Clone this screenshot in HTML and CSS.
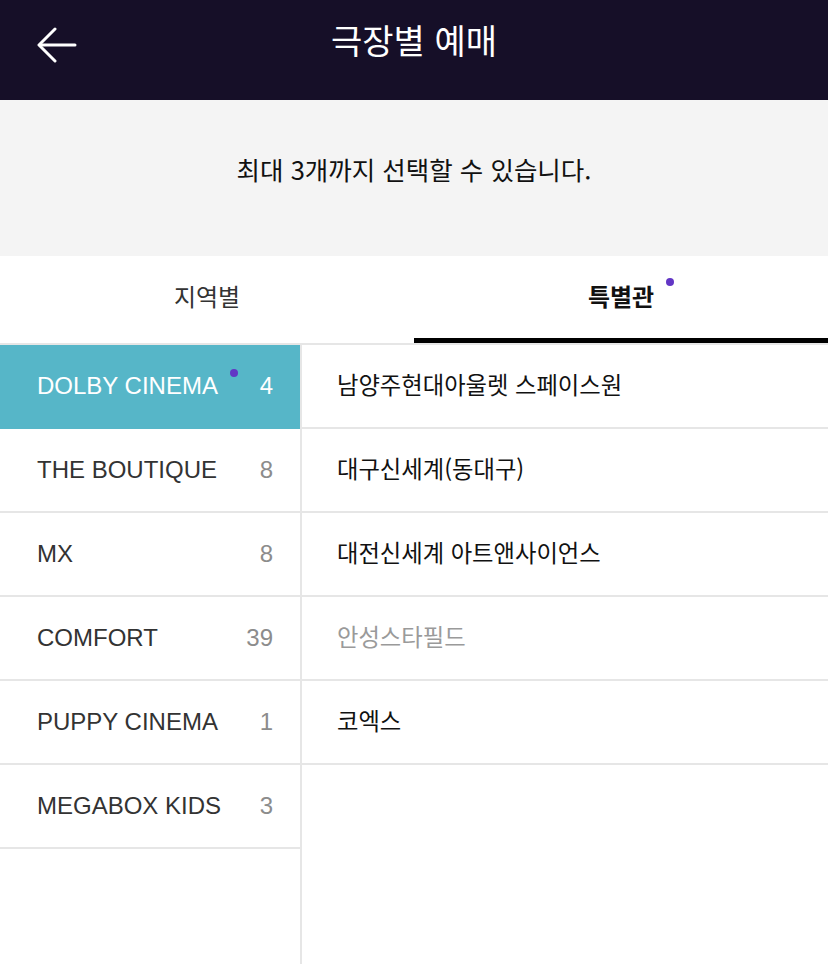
FILE: index.html
```html
<!DOCTYPE html>
<html lang="ko">
<head>
<meta charset="utf-8">
<title>극장별 예매</title>
<link rel="stylesheet" href="styles.css">
</head>
<body>
<header class="topbar">
  <button class="back" aria-label="뒤로">
    <svg width="40" height="36" viewBox="0 0 40 36" fill="none" stroke="#fff" stroke-width="3" stroke-linecap="round" stroke-linejoin="round">
      <path d="M38 18H3"/>
      <path d="M18 2L2 18L18 34"/>
    </svg>
  </button>
  <h1 class="title">극장별 예매</h1>
</header>
<div class="notice">최대 3개까지 선택할 수 있습니다.</div>
<nav class="tabs">
  <div class="tab">지역별</div>
  <div class="tab active"><span class="tab-label">특별관<span class="dot"></span></span></div>
</nav>
<main class="lists">
  <ul class="cats">
    <li class="cat selected"><span class="cat-name">DOLBY CINEMA<span class="dot"></span></span><span class="cnt">4</span></li>
    <li class="cat"><span class="cat-name">THE BOUTIQUE</span><span class="cnt">8</span></li>
    <li class="cat"><span class="cat-name">MX</span><span class="cnt">8</span></li>
    <li class="cat"><span class="cat-name">COMFORT</span><span class="cnt">39</span></li>
    <li class="cat"><span class="cat-name">PUPPY CINEMA</span><span class="cnt">1</span></li>
    <li class="cat"><span class="cat-name">MEGABOX KIDS</span><span class="cnt">3</span></li>
  </ul>
  <ul class="theaters">
    <li class="th">남양주현대아울렛 스페이스원</li>
    <li class="th">대구신세계(동대구)</li>
    <li class="th">대전신세계 아트앤사이언스</li>
    <li class="th disabled">안성스타필드</li>
    <li class="th">코엑스</li>
  </ul>
</main>
</body>
</html>
```
FILE: styles.css
```css
* { box-sizing: border-box; }
html, body { margin: 0; padding: 0; }
body {
  width: 828px;
  height: 964px;
  overflow: hidden;
  background: #fff;
  font-family: "Noto Sans CJK KR", "Noto Sans", sans-serif;
  color: #222;
}
ul { list-style: none; margin: 0; padding: 0; }

.topbar {
  height: 100px;
  background: #160f28;
  display: flex;
  align-items: center;
  justify-content: center;
  position: relative;
}
.back {
  position: absolute;
  left: 37px;
  top: 27px;
  background: none;
  border: 0;
  padding: 0;
  width: 40px;
  height: 36px;
  display: block;
}
.back svg { display: block; }
.title {
  margin: 0 0 22px 0;
  font-size: 34px;
  font-weight: 400;
  color: #fff;
  letter-spacing: 0;
}

.notice {
  height: 156px;
  background: #f4f4f4;
  display: flex;
  align-items: center;
  justify-content: center;
  font-size: 25.5px;
  color: #111;
  padding-bottom: 20px;
}

.tabs {
  display: flex;
  height: 89px;
  border-bottom: 2px solid #e6e6e6;
}
.tab {
  flex: 1;
  display: flex;
  align-items: center;
  justify-content: center;
  font-size: 24px;
  color: #333;
  padding-bottom: 8px;
}
.tab.active {
  font-weight: 700;
  color: #111;
  border-bottom: 5px solid #000;
  padding-bottom: 4px;
}
.tab-label { position: relative; }
.dot {
  display: inline-block;
  width: 8px;
  height: 8px;
  border-radius: 50%;
  background: #6236c5;
  position: absolute;
}
.tab-label .dot { right: -20px; top: 0px; }

.lists {
  display: flex;
  height: 621px;
}
.cats {
  width: 302px;
  border-right: 2px solid #e6e6e6;
}
.cat {
  height: 84px;
  border-bottom: 2px solid #e6e6e6;
  display: flex;
  align-items: center;
  justify-content: space-between;
  padding: 0 27px 0 37px;
  font-family: "Liberation Sans", "Noto Sans", sans-serif;
  font-size: 24px;
  color: #333;
}
.cat.selected {
  background: #56b6c8;
  color: #fff;
  border-bottom-color: #56b6c8;
}
.cat-name { position: relative; }
.cat .dot { right: -20px; top: -3px; }
.cnt { color: #8c8c8c; }
.cat.selected .cnt { color: #fff; }

.theaters { flex: 1; }
.th {
  height: 84px;
  border-bottom: 2px solid #e6e6e6;
  display: flex;
  align-items: center;
  padding-left: 35px;
  padding-bottom: 4px;
  font-size: 23.3px;
  color: #111;
}
.th.disabled { color: #9a9a9a; }
```
